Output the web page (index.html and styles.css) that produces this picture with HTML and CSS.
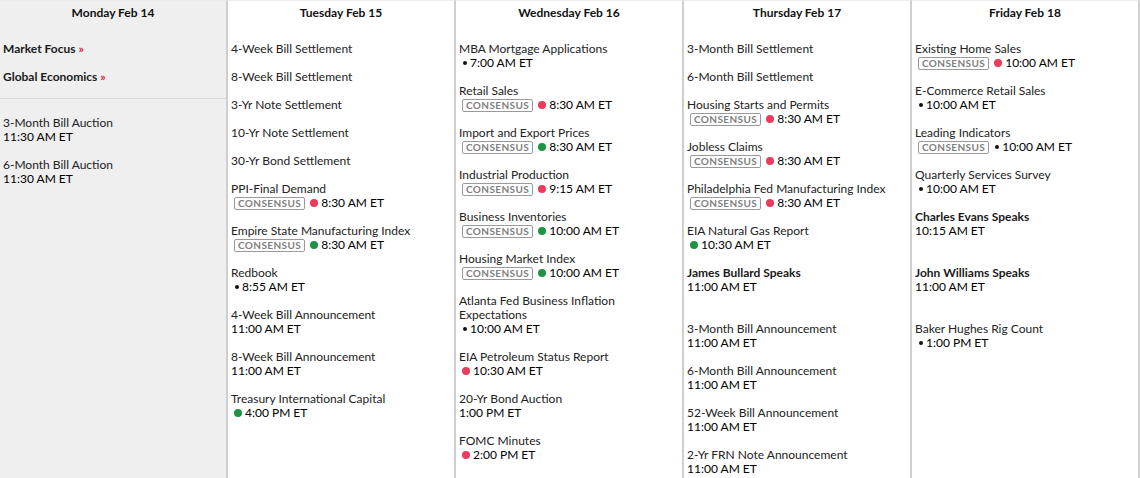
FILE: index.html
```html
<!DOCTYPE html>
<html>
<head>
<meta charset="utf-8">
<link rel="stylesheet" href="styles.css">
</head>
<body>
<div class="week">
  <div class="day day-first">
    <div class="day-head">Monday Feb 14</div>
    <div class="day-body">
      <div class="ev"><div class="link">Market Focus <span class="raquo">»</span></div></div>
      <div class="ev"><div class="link">Global Economics <span class="raquo">»</span></div></div>
      <div class="sep"></div>
      <div class="ev"><div class="title">3-Month Bill Auction</div><div class="time plain">11:30 AM ET</div></div>
      <div class="ev"><div class="title">6-Month Bill Auction</div><div class="time plain">11:30 AM ET</div></div>
    </div>
  </div>
  <div class="day">
    <div class="day-head">Tuesday Feb 15</div>
    <div class="day-body">
      <div class="ev"><div class="title">4-Week Bill Settlement</div></div>
      <div class="ev"><div class="title">8-Week Bill Settlement</div></div>
      <div class="ev"><div class="title">3-Yr Note Settlement</div></div>
      <div class="ev"><div class="title">10-Yr Note Settlement</div></div>
      <div class="ev"><div class="title">30-Yr Bond Settlement</div></div>
      <div class="ev"><div class="title">PPI-Final Demand</div><div class="time"><span class="badge">Consensus</span><span class="dot red"></span>8:30 AM ET</div></div>
      <div class="ev"><div class="title">Empire State Manufacturing Index</div><div class="time"><span class="badge">Consensus</span><span class="dot green"></span>8:30 AM ET</div></div>
      <div class="ev"><div class="title">Redbook</div><div class="time"><span class="bullet"></span>8:55 AM ET</div></div>
      <div class="ev"><div class="title">4-Week Bill Announcement</div><div class="time plain">11:00 AM ET</div></div>
      <div class="ev"><div class="title">8-Week Bill Announcement</div><div class="time plain">11:00 AM ET</div></div>
      <div class="ev"><div class="title">Treasury International Capital</div><div class="time"><span class="dot green"></span>4:00 PM ET</div></div>
    </div>
  </div>
  <div class="day">
    <div class="day-head">Wednesday Feb 16</div>
    <div class="day-body">
      <div class="ev"><div class="title">MBA Mortgage Applications</div><div class="time"><span class="bullet"></span>7:00 AM ET</div></div>
      <div class="ev"><div class="title">Retail Sales</div><div class="time"><span class="badge">Consensus</span><span class="dot red"></span>8:30 AM ET</div></div>
      <div class="ev"><div class="title">Import and Export Prices</div><div class="time"><span class="badge">Consensus</span><span class="dot green"></span>8:30 AM ET</div></div>
      <div class="ev"><div class="title">Industrial Production</div><div class="time"><span class="badge">Consensus</span><span class="dot red"></span>9:15 AM ET</div></div>
      <div class="ev"><div class="title">Business Inventories</div><div class="time"><span class="badge">Consensus</span><span class="dot green"></span>10:00 AM ET</div></div>
      <div class="ev"><div class="title">Housing Market Index</div><div class="time"><span class="badge">Consensus</span><span class="dot green"></span>10:00 AM ET</div></div>
      <div class="ev"><div class="title">Atlanta Fed Business Inflation Expectations</div><div class="time"><span class="bullet"></span>10:00 AM ET</div></div>
      <div class="ev"><div class="title">EIA Petroleum Status Report</div><div class="time"><span class="dot red"></span>10:30 AM ET</div></div>
      <div class="ev"><div class="title">20-Yr Bond Auction</div><div class="time plain">1:00 PM ET</div></div>
      <div class="ev"><div class="title">FOMC Minutes</div><div class="time"><span class="dot red"></span>2:00 PM ET</div></div>
    </div>
  </div>
  <div class="day">
    <div class="day-head">Thursday Feb 17</div>
    <div class="day-body">
      <div class="ev"><div class="title">3-Month Bill Settlement</div></div>
      <div class="ev"><div class="title">6-Month Bill Settlement</div></div>
      <div class="ev"><div class="title">Housing Starts and Permits</div><div class="time"><span class="badge">Consensus</span><span class="dot red"></span>8:30 AM ET</div></div>
      <div class="ev"><div class="title">Jobless Claims</div><div class="time"><span class="badge">Consensus</span><span class="dot red"></span>8:30 AM ET</div></div>
      <div class="ev"><div class="title">Philadelphia Fed Manufacturing Index</div><div class="time"><span class="badge">Consensus</span><span class="dot red"></span>8:30 AM ET</div></div>
      <div class="ev"><div class="title">EIA Natural Gas Report</div><div class="time"><span class="dot green"></span>10:30 AM ET</div></div>
      <div class="ev speech"><div class="title">James Bullard Speaks</div><div class="time plain">11:00 AM ET</div></div>
      <div class="ev"><div class="title">3-Month Bill Announcement</div><div class="time plain">11:00 AM ET</div></div>
      <div class="ev"><div class="title">6-Month Bill Announcement</div><div class="time plain">11:00 AM ET</div></div>
      <div class="ev"><div class="title">52-Week Bill Announcement</div><div class="time plain">11:00 AM ET</div></div>
      <div class="ev"><div class="title">2-Yr FRN Note Announcement</div><div class="time plain">11:00 AM ET</div></div>
    </div>
  </div>
  <div class="day">
    <div class="day-head">Friday Feb 18</div>
    <div class="day-body">
      <div class="ev"><div class="title">Existing Home Sales</div><div class="time"><span class="badge">Consensus</span><span class="dot red"></span>10:00 AM ET</div></div>
      <div class="ev"><div class="title">E-Commerce Retail Sales</div><div class="time"><span class="bullet"></span>10:00 AM ET</div></div>
      <div class="ev"><div class="title">Leading Indicators</div><div class="time"><span class="badge">Consensus</span><span class="bullet"></span>10:00 AM ET</div></div>
      <div class="ev"><div class="title">Quarterly Services Survey</div><div class="time"><span class="bullet"></span>10:00 AM ET</div></div>
      <div class="ev speech"><div class="title">Charles Evans Speaks</div><div class="time plain">10:15 AM ET</div></div>
      <div class="ev speech"><div class="title">John Williams Speaks</div><div class="time plain">11:00 AM ET</div></div>
      <div class="ev"><div class="title">Baker Hughes Rig Count</div><div class="time"><span class="bullet"></span>1:00 PM ET</div></div>
    </div>
  </div>
</div>
</body>
</html>
```

FILE: styles.css
```css
html, body {
  margin: 0;
  padding: 0;
  background: #fff;
}
body {
  font-family: Lato, "Liberation Sans", sans-serif;
  font-size: 12px;
  line-height: 14px;
  color: #222;
  height: 478px;
  overflow: hidden;
}
.week {
  display: grid;
  grid-template-columns: repeat(5, 1fr);
  height: 478px;
}
.day {
  border-right: 2px solid #cfcfcf;
  border-top: 1px solid #ececec;
  background: #fff;
}
.day-first {
  background: #efefef;
}
.day-head {
  text-align: center;
  font-weight: 700;
  font-size: 12px;
  line-height: 16px;
  color: #111;
  padding: 4px 0 0;
  height: 41px;
  box-sizing: border-box;
}
.day-body {
  padding: 0 3px;
}
.ev {
  margin-bottom: 14px;
}
.ev.speech {
  padding-bottom: 14px;
}
.title {
  color: #222;
}
.speech .title,
.link {
  font-weight: 700;
  color: #1a1a1a;
}
.raquo {
  color: #d6243e;
}
.sep {
  border-top: 1px solid #d9d9d9;
  margin: 0 -3px 17px;
}
.time {
  display: flex;
  align-items: center;
  color: #000;
  height: 14px;
  padding-left: 2px;
}
.time.plain {
  padding-left: 0;
}
.badge {
  display: inline-block;
  box-sizing: border-box;
  height: 13px;
  line-height: 11px;
  border: 1px solid #9a9a9a;
  border-radius: 2px;
  padding: 0 3px;
  font-size: 10px;
  font-weight: 700;
  letter-spacing: 0.4px;
  text-transform: uppercase;
  color: #808080;
  margin-left: 1px;
  margin-right: 4px;
}
.dot {
  display: inline-block;
  width: 8px;
  height: 8px;
  border-radius: 50%;
  margin-right: 3px;
  margin-left: 1px;
}
.dot.red {
  background: #ec3a5c;
}
.dot.green {
  background: #1c9444;
}
.bullet {
  display: inline-block;
  width: 4px;
  height: 4px;
  border-radius: 50%;
  background: #111;
  margin: 0 3px 0 2px;
}
```
